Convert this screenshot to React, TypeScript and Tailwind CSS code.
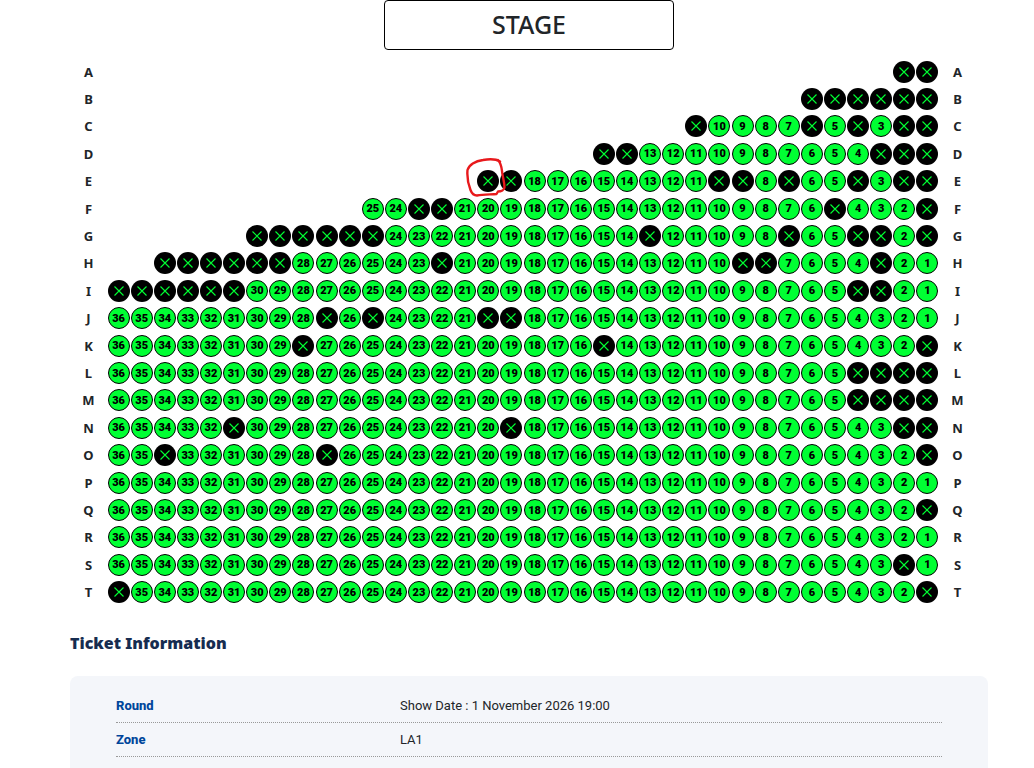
type SeatRow = {
  name: string;
  count: number;
  sold: number[];
};

const SEATS_PER_ROW = 36;

const rows: SeatRow[] = [
  { name: "A", count: 2, sold: [2, 1] },
  { name: "B", count: 6, sold: [6, 5, 4, 3, 2, 1] },
  { name: "C", count: 11, sold: [11, 6, 4, 2, 1] },
  { name: "D", count: 15, sold: [15, 14, 3, 2, 1] },
  { name: "E", count: 20, sold: [20, 19, 10, 9, 7, 4, 2, 1] },
  { name: "F", count: 25, sold: [23, 22, 5, 1] },
  { name: "G", count: 30, sold: [30, 29, 28, 27, 26, 25, 13, 7, 4, 3, 1] },
  { name: "H", count: 34, sold: [34, 33, 32, 31, 30, 29, 22, 9, 8, 3] },
  { name: "I", count: 36, sold: [36, 35, 34, 33, 32, 31, 4, 3] },
  { name: "J", count: 36, sold: [27, 25, 20, 19] },
  { name: "K", count: 36, sold: [28, 15, 1] },
  { name: "L", count: 36, sold: [4, 3, 2, 1] },
  { name: "M", count: 36, sold: [4, 3, 2, 1] },
  { name: "N", count: 36, sold: [31, 19, 2, 1] },
  { name: "O", count: 36, sold: [34, 27, 1] },
  { name: "P", count: 36, sold: [] },
  { name: "Q", count: 36, sold: [1] },
  { name: "R", count: 36, sold: [] },
  { name: "S", count: 36, sold: [2] },
  { name: "T", count: 36, sold: [36, 1] },
];

const ticketInfo = [
  { label: "Round", value: "Show Date : 1 November 2026 19:00" },
  { label: "Zone", value: "LA1" },
];

const markedSeat = "E20";

function SeatMark(): React.JSX.Element {
  return (
    <svg
      className="pointer-events-none absolute -left-3 -top-[13px] z-10 h-10 w-[42px] max-w-none"
      viewBox="0 0 42 40"
      fill="none"
      stroke="#e8191c"
      strokeWidth="2.4"
      strokeLinecap="round"
      strokeLinejoin="round"
      aria-hidden="true"
    >
      <path d="M35 4.5C31 2 24 2 18 3C10 4 4 8 2.500 13C2 19 3.500 28 5.500 33C7 37 9 38.500 12 38.500C18 37.500 25 37.500 31.500 37L33 34.500C36 34.500 39.500 33 39.500 30C39.500 25 37.500 20 37 14C36.500 9 35.500 6 33 3" />
    </svg>
  );
}

function Seat({ row, number, sold }: { row: string; number: number; sold: boolean }): React.JSX.Element {
  const id = `${row}${number}`;

  return (
    <div className="relative size-[22px]">
      {sold ? (
        <button
          type="button"
          disabled
          aria-label={`Seat ${id}, unavailable`}
          className="flex size-full items-center justify-center rounded-full bg-black"
        >
          <svg className="size-[10px]" viewBox="0 0 10 10" stroke="#00ff33" strokeWidth="1.1" aria-hidden="true">
            <path d="M0.500 0.500L9.500 9.500M9.500 0.500L0.500 9.500" />
          </svg>
        </button>
      ) : (
        <button
          type="button"
          aria-label={`Seat ${id}`}
          className="flex size-full cursor-pointer items-center justify-center rounded-full border border-black bg-[#00ff33] font-[Roboto,sans-serif] text-[11px] font-black leading-none text-black"
        >
          {number}
        </button>
      )}
      {id === markedSeat ? <SeatMark /> : null}
    </div>
  );
}

function SeatMapRow({ row }: { row: SeatRow }): React.JSX.Element {
  const numbers = Array.from({ length: row.count }, (_, i) => row.count - i);

  return (
    <div className="grid grid-cols-[37px_minmax(0,1fr)_37px] items-center">
      <span className="text-center">{row.name}</span>
      <div className="grid grid-cols-[repeat(36,minmax(0,1fr))] justify-items-center">
        {numbers.map((number) => (
          <div key={number} style={{ gridColumn: SEATS_PER_ROW + 1 - number }}>
            <Seat row={row.name} number={number} sold={row.sold.includes(number)} />
          </div>
        ))}
      </div>
      <span className="text-center">{row.name}</span>
    </div>
  );
}

export default function App(): React.JSX.Element {
  return (
    <main className="flex min-h-screen flex-col bg-white pl-[70px] pr-[46px] font-['Noto_Sans',sans-serif] text-[#212529]">
      <div className="mx-auto flex h-[50px] w-[290px] items-center justify-center rounded border border-black text-[25px] font-medium">
        STAGE
      </div>

      <section
        aria-label="Seat map"
        className="mt-2 grid h-[548px] auto-rows-fr pr-3 text-[13px] font-bold leading-4"
      >
        {rows.map((row) => (
          <SeatMapRow key={row.name} row={row} />
        ))}
      </section>

      <h2 className="mt-[25px] text-base font-black leading-6 text-[#162c50]">Ticket Information</h2>

      <dl className="mt-[21px] flex-1 rounded-t-lg bg-[#f4f6fa] px-[46px] pt-[13px] font-[Roboto,sans-serif] text-[13px]">
        {ticketInfo.map((item) => (
          <div
            key={item.label}
            className="grid h-[34px] grid-cols-[284px_minmax(0,1fr)] items-center border-b border-dotted border-[#999999]"
          >
            <dt className="font-extrabold text-[#00469b]">{item.label}</dt>
            <dd>{item.value}</dd>
          </div>
        ))}
      </dl>
    </main>
  );
}
